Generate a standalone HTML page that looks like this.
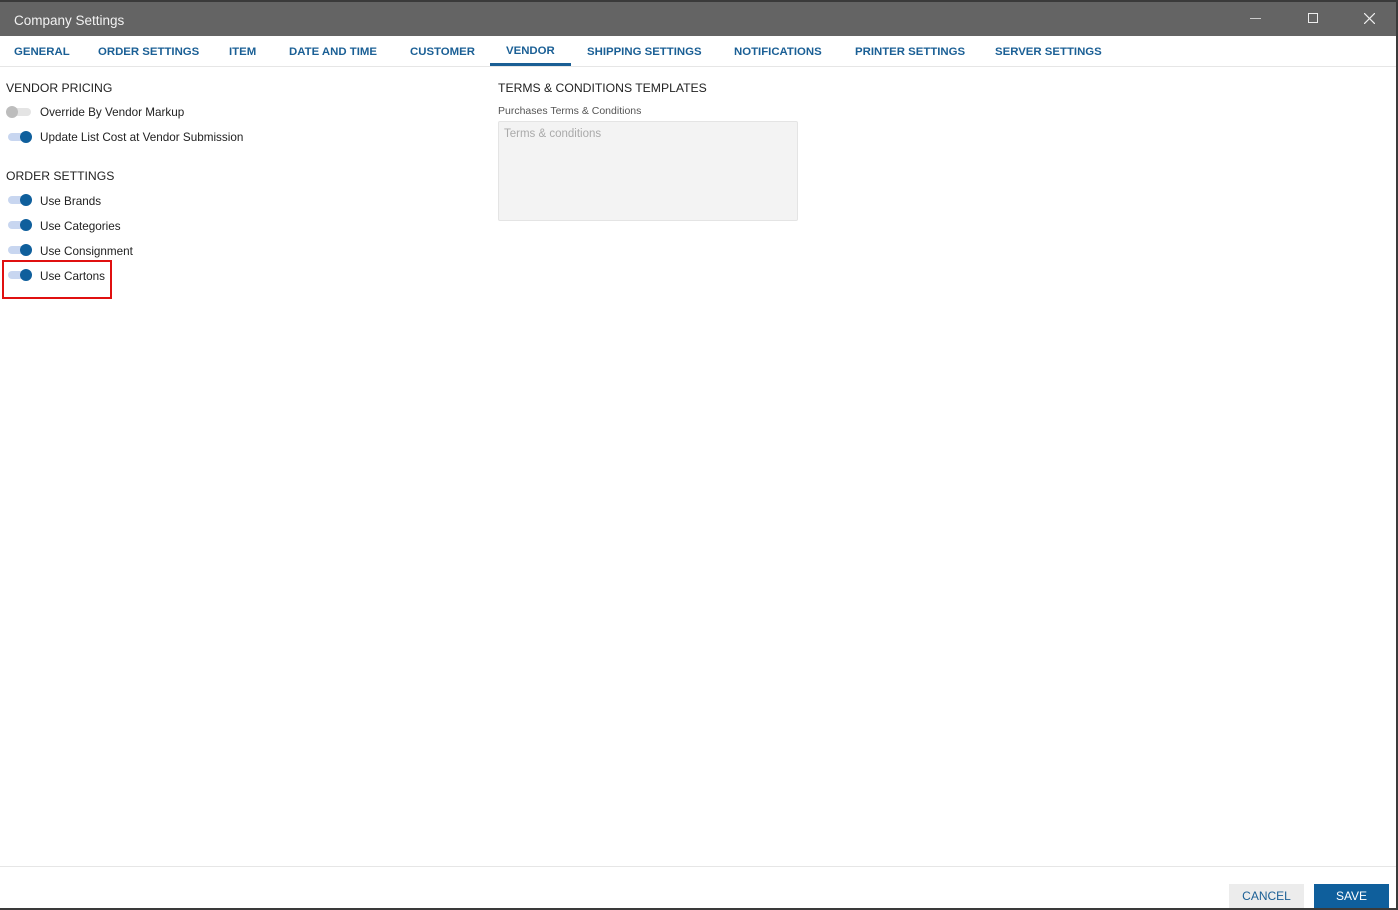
<!DOCTYPE html>
<html><head><style>
*{margin:0;padding:0;box-sizing:border-box}
body{width:1398px;height:910px;background:#fff;font-family:"Liberation Sans",sans-serif;position:relative;overflow:hidden}
.abs{position:absolute;white-space:nowrap}
.title{left:0;top:0;width:1398px;height:36px;background:#646464;border-top:2px solid #3a3a3a}
.tab{top:46px;font-size:11.4px;font-weight:bold;color:#1a5f95}
.h{font-size:12.2px;color:#222}
.lbl{font-size:11.7px;color:#222}
.tg{width:24px;height:8px;border-radius:4px;background:#c8d6f0}
.tg.off{background:#e4e4e4}
.k{width:12px;height:12px;border-radius:6px;background:#0f5f9c}
.k.off{background:#bdbdbd}
</style></head><body>
<div class="abs title"></div>
<div class="abs" style="left:14px;top:13px;font-size:13.5px;color:#f2f2f2">Company Settings</div>
<div class="abs" style="left:1250px;top:18px;width:11px;height:1px;background:#ccc"></div>
<div class="abs" style="left:1308px;top:13px;width:10px;height:10px;border:1px solid #eee"></div>
<svg class="abs" style="left:1364px;top:13px" width="11" height="11"><path d="M0 0L11 11M11 0L0 11" stroke="#eee" stroke-width="1.2"/></svg>
<div class="abs" style="left:1396px;top:0;width:2px;height:910px;background:#3a3a3a"></div>
<div class="abs" style="left:0;top:908px;width:1398px;height:2px;background:#3a3a3a"></div>
<div class="abs tab" style="left:14px">GENERAL</div>
<div class="abs tab" style="left:98px">ORDER SETTINGS</div>
<div class="abs tab" style="left:229px">ITEM</div>
<div class="abs tab" style="left:289px">DATE AND TIME</div>
<div class="abs tab" style="left:410px">CUSTOMER</div>
<div class="abs tab" style="left:506px;top:45px">VENDOR</div>
<div class="abs tab" style="left:587px">SHIPPING SETTINGS</div>
<div class="abs tab" style="left:734px">NOTIFICATIONS</div>
<div class="abs tab" style="left:855px">PRINTER SETTINGS</div>
<div class="abs tab" style="left:995px">SERVER SETTINGS</div>
<div class="abs" style="left:490px;top:63px;width:81px;height:3px;background:#1a5f95"></div>
<div class="abs" style="left:0;top:66px;width:1396px;height:1px;background:#e6e6e6"></div>

<div class="abs h" style="left:6px;top:81px">VENDOR PRICING</div>
<div class="abs tg off" style="left:7px;top:108px"></div><div class="abs k off" style="left:6px;top:106px"></div>
<div class="abs lbl" style="left:40px;top:106px">Override By Vendor Markup</div>
<div class="abs tg" style="left:8px;top:133px"></div><div class="abs k" style="left:20px;top:131px"></div>
<div class="abs lbl" style="left:40px;top:131px">Update List Cost at Vendor Submission</div>

<div class="abs h" style="left:6px;top:169px">ORDER SETTINGS</div>
<div class="abs tg" style="left:8px;top:196px"></div><div class="abs k" style="left:20px;top:194px"></div>
<div class="abs lbl" style="left:40px;top:195px">Use Brands</div>
<div class="abs tg" style="left:8px;top:221px"></div><div class="abs k" style="left:20px;top:219px"></div>
<div class="abs lbl" style="left:40px;top:220px">Use Categories</div>
<div class="abs tg" style="left:8px;top:246px"></div><div class="abs k" style="left:20px;top:244px"></div>
<div class="abs lbl" style="left:40px;top:245px">Use Consignment</div>
<div class="abs tg" style="left:8px;top:271px"></div><div class="abs k" style="left:20px;top:269px"></div>
<div class="abs lbl" style="left:40px;top:270px">Use Cartons</div>
<div class="abs" style="left:2px;top:260px;width:110px;height:39px;border:2px solid #e01010"></div>

<div class="abs h" style="left:498px;top:81px">TERMS &amp; CONDITIONS TEMPLATES</div>
<div class="abs" style="left:498px;top:105px;font-size:10.5px;color:#555">Purchases Terms &amp; Conditions</div>
<div class="abs" style="left:498px;top:121px;width:300px;height:100px;background:#f3f3f3;border:1px solid #e4e4e4;border-radius:2px"></div>
<div class="abs" style="left:504px;top:128px;font-size:11.5px;color:#aaa">Terms &amp; conditions</div>

<div class="abs" style="left:0;top:866px;width:1396px;height:1px;background:#e6e6e6"></div>
<div class="abs" style="left:1229px;top:884px;width:75px;height:24px;background:#ececec;color:#1a5f95;font-size:12px;text-align:center;line-height:24px">CANCEL</div>
<div class="abs" style="left:1314px;top:884px;width:75px;height:24px;background:#0f5f9c;color:#fff;font-size:12px;text-align:center;line-height:24px">SAVE</div>
</body></html>
